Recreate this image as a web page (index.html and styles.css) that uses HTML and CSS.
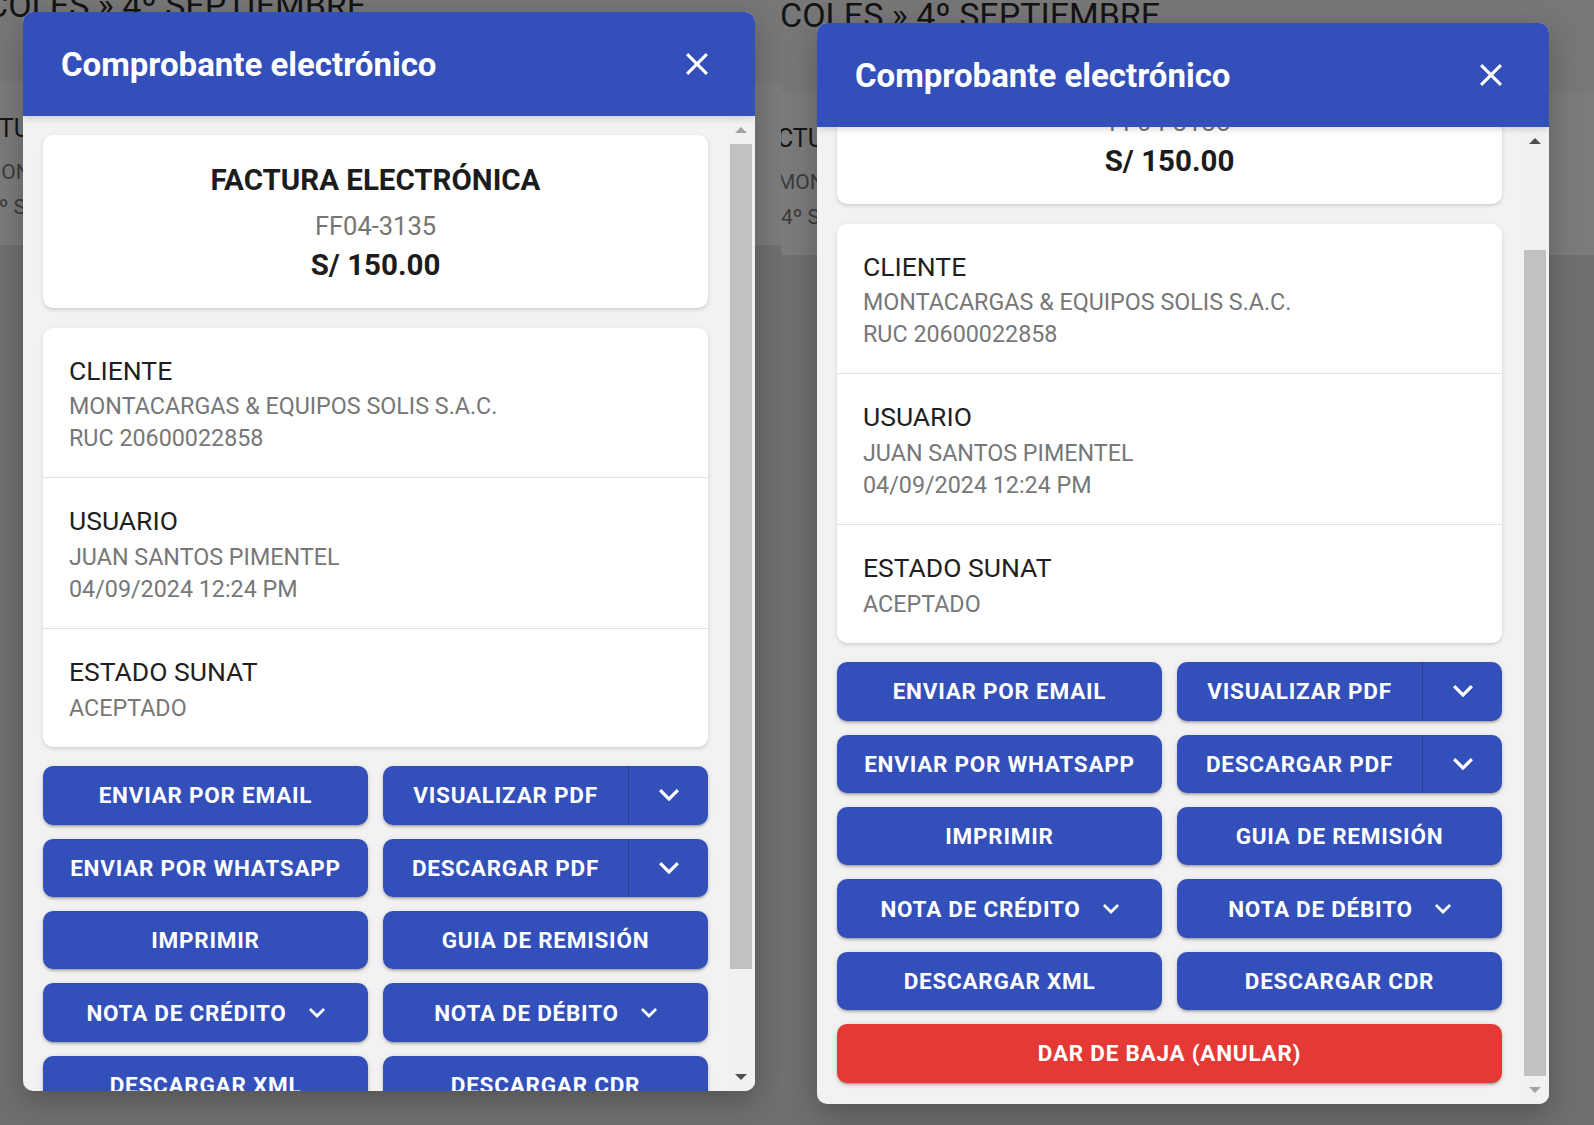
FILE: index.html
```html
<!DOCTYPE html>
<html lang="es">
<head>
<meta charset="utf-8">
<title>Comprobante electrónico</title>
<link rel="stylesheet" href="styles.css">
</head>
<body>
<div class="stage">

  <!-- LEFT CAPTURE -->
  <section class="shot shot-left">
    <div class="page">
      <div class="page-top"><div class="page-title">COLES » 4º SEPTIEMBRE</div></div>
      <div class="page-card">
        <div class="pc-line1">FACTURA ELECTRÓNICA</div>
        <div class="pc-line2">MONTACARGAS &amp; EQUIPOS SOLIS S.A.C.</div>
        <div class="pc-line3">4º SEPTIEMBRE 12:24 PM</div>
      </div>
    </div>

    <div class="dialog dialog-left">
      <header class="dialog-head">
        <h1 class="dialog-title">Comprobante electrónico</h1>
        <svg class="close-icon" viewBox="5 5 14 14" width="22" height="22"><path d="M19 6.41 17.59 5 12 10.59 6.41 5 5 6.41 10.59 12 5 17.59 6.41 19 12 13.41 17.59 19 19 17.59 13.41 12z" fill="#fff"/></svg>
      </header>
      <div class="dialog-body">
        <div class="scroll-view">
          <div class="scroll-inner">
            <div class="card summary">
              <div class="sum-type">FACTURA ELECTRÓNICA</div>
              <div class="sum-num">FF04-3135</div>
              <div class="sum-total">S/ 150.00</div>
            </div>
            <div class="card details">
              <div class="det-sec">
                <div class="det-label">CLIENTE</div>
                <div class="det-value">MONTACARGAS &amp; EQUIPOS SOLIS S.A.C.</div>
                <div class="det-value">RUC 20600022858</div>
              </div>
              <div class="det-sec">
                <div class="det-label">USUARIO</div>
                <div class="det-value">JUAN SANTOS PIMENTEL</div>
                <div class="det-value">04/09/2024 12:24 PM</div>
              </div>
              <div class="det-sec">
                <div class="det-label">ESTADO SUNAT</div>
                <div class="det-value">ACEPTADO</div>
              </div>
            </div>
            <div class="actions">
              <div class="btn">ENVIAR POR EMAIL</div>
              <div class="btn btn-split"><span class="btn-main">VISUALIZAR PDF</span><span class="btn-caret"><svg class="chev-lg" viewBox="6 8.59 12 7.41" width="20" height="12.4"><path d="M7.41 8.59 12 13.17l4.59-4.58L18 10l-6 6-6-6z" fill="#fff"/></svg></span></div>
              <div class="btn">ENVIAR POR WHATSAPP</div>
              <div class="btn btn-split"><span class="btn-main">DESCARGAR PDF</span><span class="btn-caret"><svg class="chev-lg" viewBox="6 8.59 12 7.41" width="20" height="12.4"><path d="M7.41 8.59 12 13.17l4.59-4.58L18 10l-6 6-6-6z" fill="#fff"/></svg></span></div>
              <div class="btn">IMPRIMIR</div>
              <div class="btn">GUIA DE REMISIÓN</div>
              <div class="btn btn-menu">NOTA DE CRÉDITO<svg class="chev-sm" viewBox="6 8.59 12 7.41" width="16" height="9.9"><path d="M7.41 8.59 12 13.17l4.59-4.58L18 10l-6 6-6-6z" fill="#fff"/></svg></div>
              <div class="btn btn-menu">NOTA DE DÉBITO<svg class="chev-sm" viewBox="6 8.59 12 7.41" width="16" height="9.9"><path d="M7.41 8.59 12 13.17l4.59-4.58L18 10l-6 6-6-6z" fill="#fff"/></svg></div>
              <div class="btn">DESCARGAR XML</div>
              <div class="btn">DESCARGAR CDR</div>
              <div class="btn btn-danger">DAR DE BAJA (ANULAR)</div>
            </div>
          </div>
        </div>
        <div class="scrollbar">
          <div class="sb-btn"><span class="tri-up tri-off"></span></div>
          <div class="sb-track"><div class="sb-thumb" style="margin-top:0px;height:825px"></div></div>
          <div class="sb-btn"><span class="tri-down"></span></div>
        </div>
      </div>
    </div>
  </section>

  <!-- RIGHT CAPTURE -->
  <section class="shot shot-right">
    <div class="page">
      <div class="page-top"><div class="page-title">COLES » 4º SEPTIEMBRE</div></div>
      <div class="page-card">
        <div class="pc-line1">FACTURA ELECTRÓNICA</div>
        <div class="pc-line2">MONTACARGAS &amp; EQUIPOS SOLIS S.A.C.</div>
        <div class="pc-line3">4º SEPTIEMBRE 12:24 PM</div>
      </div>
    </div>

    <div class="dialog dialog-right">
      <header class="dialog-head">
        <h1 class="dialog-title">Comprobante electrónico</h1>
        <svg class="close-icon" viewBox="5 5 14 14" width="22" height="22"><path d="M19 6.41 17.59 5 12 10.59 6.41 5 5 6.41 10.59 12 5 17.59 6.41 19 12 13.41 17.59 19 19 17.59 13.41 12z" fill="#fff"/></svg>
      </header>
      <div class="dialog-body">
        <div class="scroll-view">
          <div class="scroll-inner scrolled-end">
            <div class="card summary">
              <div class="sum-type">FACTURA ELECTRÓNICA</div>
              <div class="sum-num">FF04-3135</div>
              <div class="sum-total">S/ 150.00</div>
            </div>
            <div class="card details">
              <div class="det-sec">
                <div class="det-label">CLIENTE</div>
                <div class="det-value">MONTACARGAS &amp; EQUIPOS SOLIS S.A.C.</div>
                <div class="det-value">RUC 20600022858</div>
              </div>
              <div class="det-sec">
                <div class="det-label">USUARIO</div>
                <div class="det-value">JUAN SANTOS PIMENTEL</div>
                <div class="det-value">04/09/2024 12:24 PM</div>
              </div>
              <div class="det-sec">
                <div class="det-label">ESTADO SUNAT</div>
                <div class="det-value">ACEPTADO</div>
              </div>
            </div>
            <div class="actions">
              <div class="btn">ENVIAR POR EMAIL</div>
              <div class="btn btn-split"><span class="btn-main">VISUALIZAR PDF</span><span class="btn-caret"><svg class="chev-lg" viewBox="6 8.59 12 7.41" width="20" height="12.4"><path d="M7.41 8.59 12 13.17l4.59-4.58L18 10l-6 6-6-6z" fill="#fff"/></svg></span></div>
              <div class="btn">ENVIAR POR WHATSAPP</div>
              <div class="btn btn-split"><span class="btn-main">DESCARGAR PDF</span><span class="btn-caret"><svg class="chev-lg" viewBox="6 8.59 12 7.41" width="20" height="12.4"><path d="M7.41 8.59 12 13.17l4.59-4.58L18 10l-6 6-6-6z" fill="#fff"/></svg></span></div>
              <div class="btn">IMPRIMIR</div>
              <div class="btn">GUIA DE REMISIÓN</div>
              <div class="btn btn-menu">NOTA DE CRÉDITO<svg class="chev-sm" viewBox="6 8.59 12 7.41" width="16" height="9.9"><path d="M7.41 8.59 12 13.17l4.59-4.58L18 10l-6 6-6-6z" fill="#fff"/></svg></div>
              <div class="btn btn-menu">NOTA DE DÉBITO<svg class="chev-sm" viewBox="6 8.59 12 7.41" width="16" height="9.9"><path d="M7.41 8.59 12 13.17l4.59-4.58L18 10l-6 6-6-6z" fill="#fff"/></svg></div>
              <div class="btn">DESCARGAR XML</div>
              <div class="btn">DESCARGAR CDR</div>
              <div class="btn btn-danger">DAR DE BAJA (ANULAR)</div>
            </div>
          </div>
        </div>
        <div class="scrollbar">
          <div class="sb-btn"><span class="tri-up"></span></div>
          <div class="sb-track"><div class="sb-thumb" style="margin-top:95px;height:826px"></div></div>
          <div class="sb-btn"><span class="tri-down tri-off"></span></div>
        </div>
      </div>
    </div>
  </section>

</div>
</body>
</html>
```

FILE: styles.css
```css
* { box-sizing: border-box; }

html, body {
  margin: 0;
  padding: 0;
  width: 1594px;
  height: 1125px;
  overflow: hidden;
  background: #6f6f6f;
  font-family: Roboto, "Liberation Sans", Arial, sans-serif;
}

.stage {
  display: flex;
  width: 1594px;
  height: 1125px;
}

.shot {
  position: relative;
  overflow: hidden;
  height: 1125px;
  background: #777777;
}
.shot-left { width: 781px; flex: none; }
.shot-right { flex: 1; }

/* dimmed page behind the dialog */
.page {
  display: flow-root;
  min-height: 1200px;
  background: #6f6f6f;
}
.shot-left .page { margin-left: -14px; }
.shot-right .page { margin-top: 10px; margin-left: -1px; }

.page-top {
  display: flow-root;
  height: 82px;
  background: #777777;
}
.page-title {
  font-size: 34px;
  line-height: 40px;
  margin-top: -15px;
  color: #141414;
  white-space: nowrap;
}
.page-card {
  height: 163px;
  background: #7b7b7b;
  padding-top: 32px;
  white-space: nowrap;
}
.pc-line1 {
  font-size: 25px;
  line-height: 30px;
  color: #151515;
  margin-left: -31px;
}
.pc-line2 {
  font-size: 21px;
  line-height: 30px;
  color: #3c3c3c;
  margin-top: 13px;
  margin-left: -3px;
}
.pc-line3 {
  font-size: 21px;
  line-height: 30px;
  color: #3c3c3c;
  margin-top: 5px;
  margin-left: 1px;
}

/* dialog (overlays the page) */
.dialog {
  position: absolute;
  width: 732px;
  display: flex;
  flex-direction: column;
  border-radius: 10px;
  overflow: hidden;
  background: #f2f2f2;
  box-shadow: 0 10px 30px rgba(0,0,0,.25);
}
.dialog-left { left: 23px; top: 12px; height: 1079px; }
.dialog-right { left: 36px; top: 23px; height: 1081px; }

.dialog-head {
  flex: none;
  height: 104px;
  background: #334fb9;
  display: flex;
  align-items: center;
  justify-content: space-between;
  padding: 0 47px 0 38px;
  position: relative;
  z-index: 2;
  box-shadow: 0 2px 7px rgba(0,0,0,.16);
}
.dialog-title {
  margin: 0;
  font-size: 33px;
  font-weight: 700;
  color: #fff;
  letter-spacing: 0;
}
.close-icon { display: block; }

.dialog-body {
  flex: 1;
  min-height: 0;
  display: flex;
}
.scroll-view {
  flex: 1;
  min-width: 0;
  overflow: hidden;
}
.scroll-inner {
  padding: 19px 20px 20px;
  display: flex;
  flex-direction: column;
  gap: 19.5px;
}
.scrolled-end { margin-top: -115px; }

/* scrollbar */
.scrollbar {
  width: 27px;
  flex: none;
  background: #f1f1f1;
  display: flex;
  flex-direction: column;
}
.sb-btn {
  height: 28px;
  flex: none;
  display: flex;
  align-items: center;
  justify-content: center;
  padding-right: 1px;
}
.sb-track { flex: 1; min-height: 0; }
.sb-thumb {
  margin-left: 2px;
  margin-right: 3px;
  background: #c1c1c1;
}
.tri-up {
  width: 0; height: 0;
  border-left: 6px solid transparent;
  border-right: 6px solid transparent;
  border-bottom: 6px solid #505050;
}
.tri-down {
  width: 0; height: 0;
  border-left: 6px solid transparent;
  border-right: 6px solid transparent;
  border-top: 6px solid #505050;
}
.tri-up.tri-off { border-bottom-color: #a3a3a3; }
.tri-down.tri-off { border-top-color: #a3a3a3; }

/* cards */
.card {
  background: #fff;
  border-radius: 10px;
  box-shadow: 0 2px 3px rgba(0,0,0,.10), 0 1px 6px rgba(0,0,0,.06);
}
.summary {
  padding: 23px 20px 24px;
  text-align: center;
}
.sum-type {
  font-size: 29.5px;
  line-height: 44px;
  font-weight: 700;
  color: #1c1c1c;
}
.sum-num {
  font-size: 25.5px;
  line-height: 40px;
  margin-top: 4px;
  color: #757575;
}
.sum-total {
  font-size: 29.5px;
  line-height: 38px;
  font-weight: 700;
  color: #1c1c1c;
}

.det-sec {
  padding: 23px 26px;
}
.det-sec + .det-sec { border-top: 1px solid #e3e3e3; }
.det-label {
  font-size: 26.5px;
  line-height: 39.75px;
  color: #1f1f1f;
}
.det-value {
  font-size: 23.3px;
  line-height: 32px;
  color: #777777;
}

/* buttons */
.actions {
  display: grid;
  grid-template-columns: 1fr 1fr;
  column-gap: 15px;
  row-gap: 14px;
}
.btn {
  height: 58.4px;
  border-radius: 10px;
  background: #334fb9;
  color: #fff;
  font-size: 22.5px;
  font-weight: 700;
  letter-spacing: 0.75px;
  display: flex;
  align-items: center;
  justify-content: center;
  white-space: nowrap;
  box-shadow: 0 3px 2px -2px rgba(0,0,0,.2), 0 2px 3px rgba(0,0,0,.14), 0 1px 6px rgba(0,0,0,.10);
}
.btn-split { justify-content: stretch; }
.btn-main {
  flex: 1;
  text-align: center;
}
.btn-caret {
  width: 80px;
  align-self: stretch;
  border-left: 1px solid rgba(0,0,0,.22);
  display: flex;
  align-items: center;
  justify-content: center;
}
.chev-lg { display: block; }
.chev-sm { display: block; margin-left: 22px; }
.btn-danger {
  grid-column: 1 / span 2;
  background: #e53935;
}
```
